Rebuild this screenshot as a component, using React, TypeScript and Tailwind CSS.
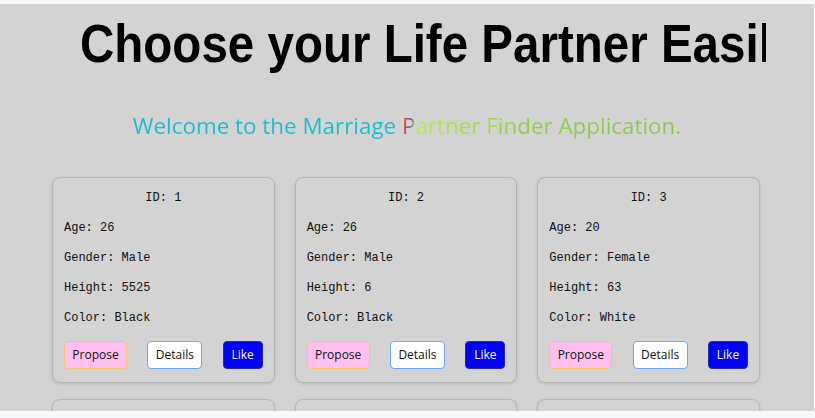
import React from 'react';

type Person = {
  id: number;
  age: number;
  gender: string;
  height: string;
  color: string;
};

const PEOPLE: Person[] = [
  { id: 1, age: 26, gender: 'Male', height: '5525', color: 'Black' },
  { id: 2, age: 26, gender: 'Male', height: '6', color: 'Black' },
  { id: 3, age: 20, gender: 'Female', height: '63', color: 'White' },
  { id: 4, age: 24, gender: 'Female', height: '5', color: 'White' },
  { id: 5, age: 28, gender: 'Male', height: '6', color: 'Brown' },
  { id: 6, age: 22, gender: 'Female', height: '5', color: 'Black' },
];

const mono = "font-['Liberation_Mono','Courier_New',monospace]";
const ui = "font-['Open_Sans','Noto_Sans',sans-serif]";

const Card: React.FC<{ p: Person }> = ({ p }) => (
  <div className="bg-[#d3d3d3] border border-[#b7b7b7] rounded-lg shadow-[0_1px_3px_rgba(0,0,0,0.12)] px-[11px] pt-[11px] pb-[13px]">
    <div className={`${mono} text-[12px] leading-[18px] text-[#111]`}>
      <p className="text-center mb-3">ID: {p.id}</p>
      <p className="mb-3">Age: {p.age}</p>
      <p className="mb-3">Gender: {p.gender}</p>
      <p className="mb-3">Height: {p.height}</p>
      <p>Color: {p.color}</p>
    </div>
    <div className={`${ui} mt-[14px] flex justify-between text-[12px]`}>
      <button className="w-[63px] h-[28px] rounded-[4px] bg-[#ffc0f0] border border-[#f5c56e] text-[#111]">
        Propose
      </button>
      <button className="w-[55px] h-[28px] rounded-[4px] bg-white border border-[#73a5f2] text-[#111]">
        Details
      </button>
      <button className="w-[40px] h-[28px] rounded-[4px] bg-[#0000ff] border border-[#2a2ab0] text-white">
        Like
      </button>
    </div>
  </div>
);

export default function App() {
  return (
    <div className="w-[815px] h-[418px] bg-[#f7f8fb] pt-[4px] overflow-hidden">
      <div className="w-[814px] h-[407px] bg-[#d3d3d3] overflow-hidden">
        {/* typing headline, clipped mid-word */}
        <div className="pt-[7px] pl-[80px]">
          <h1 className="w-[686px] overflow-hidden whitespace-nowrap font-['Liberation_Sans','Arial',sans-serif] font-bold text-[54px] leading-[64px] text-black">
            <span className="inline-block origin-left scale-x-[0.88]">
              Choose your Life Partner Easily
            </span>
          </h1>
        </div>

        <p className={`${ui} mt-[36px] text-center text-[22.4px] leading-[30px] font-medium`}>
          <span className="bg-[linear-gradient(100deg,#13bfd0_0%,#16bfce_48%,#e8433a_49.5%,#6f4fb8_50.5%,#b8f03a_51.5%,#92d04b_70%,#89c54a_100%)] bg-clip-text text-transparent">
            Welcome to the Marriage Partner Finder Application.
          </span>
        </p>

        <div className="w-[708px] ml-[52px] mt-[36px] grid grid-cols-3 gap-x-5 gap-y-4">
          {PEOPLE.map((p) => (
            <Card key={p.id} p={p} />
          ))}
        </div>
      </div>
    </div>
  );
}
